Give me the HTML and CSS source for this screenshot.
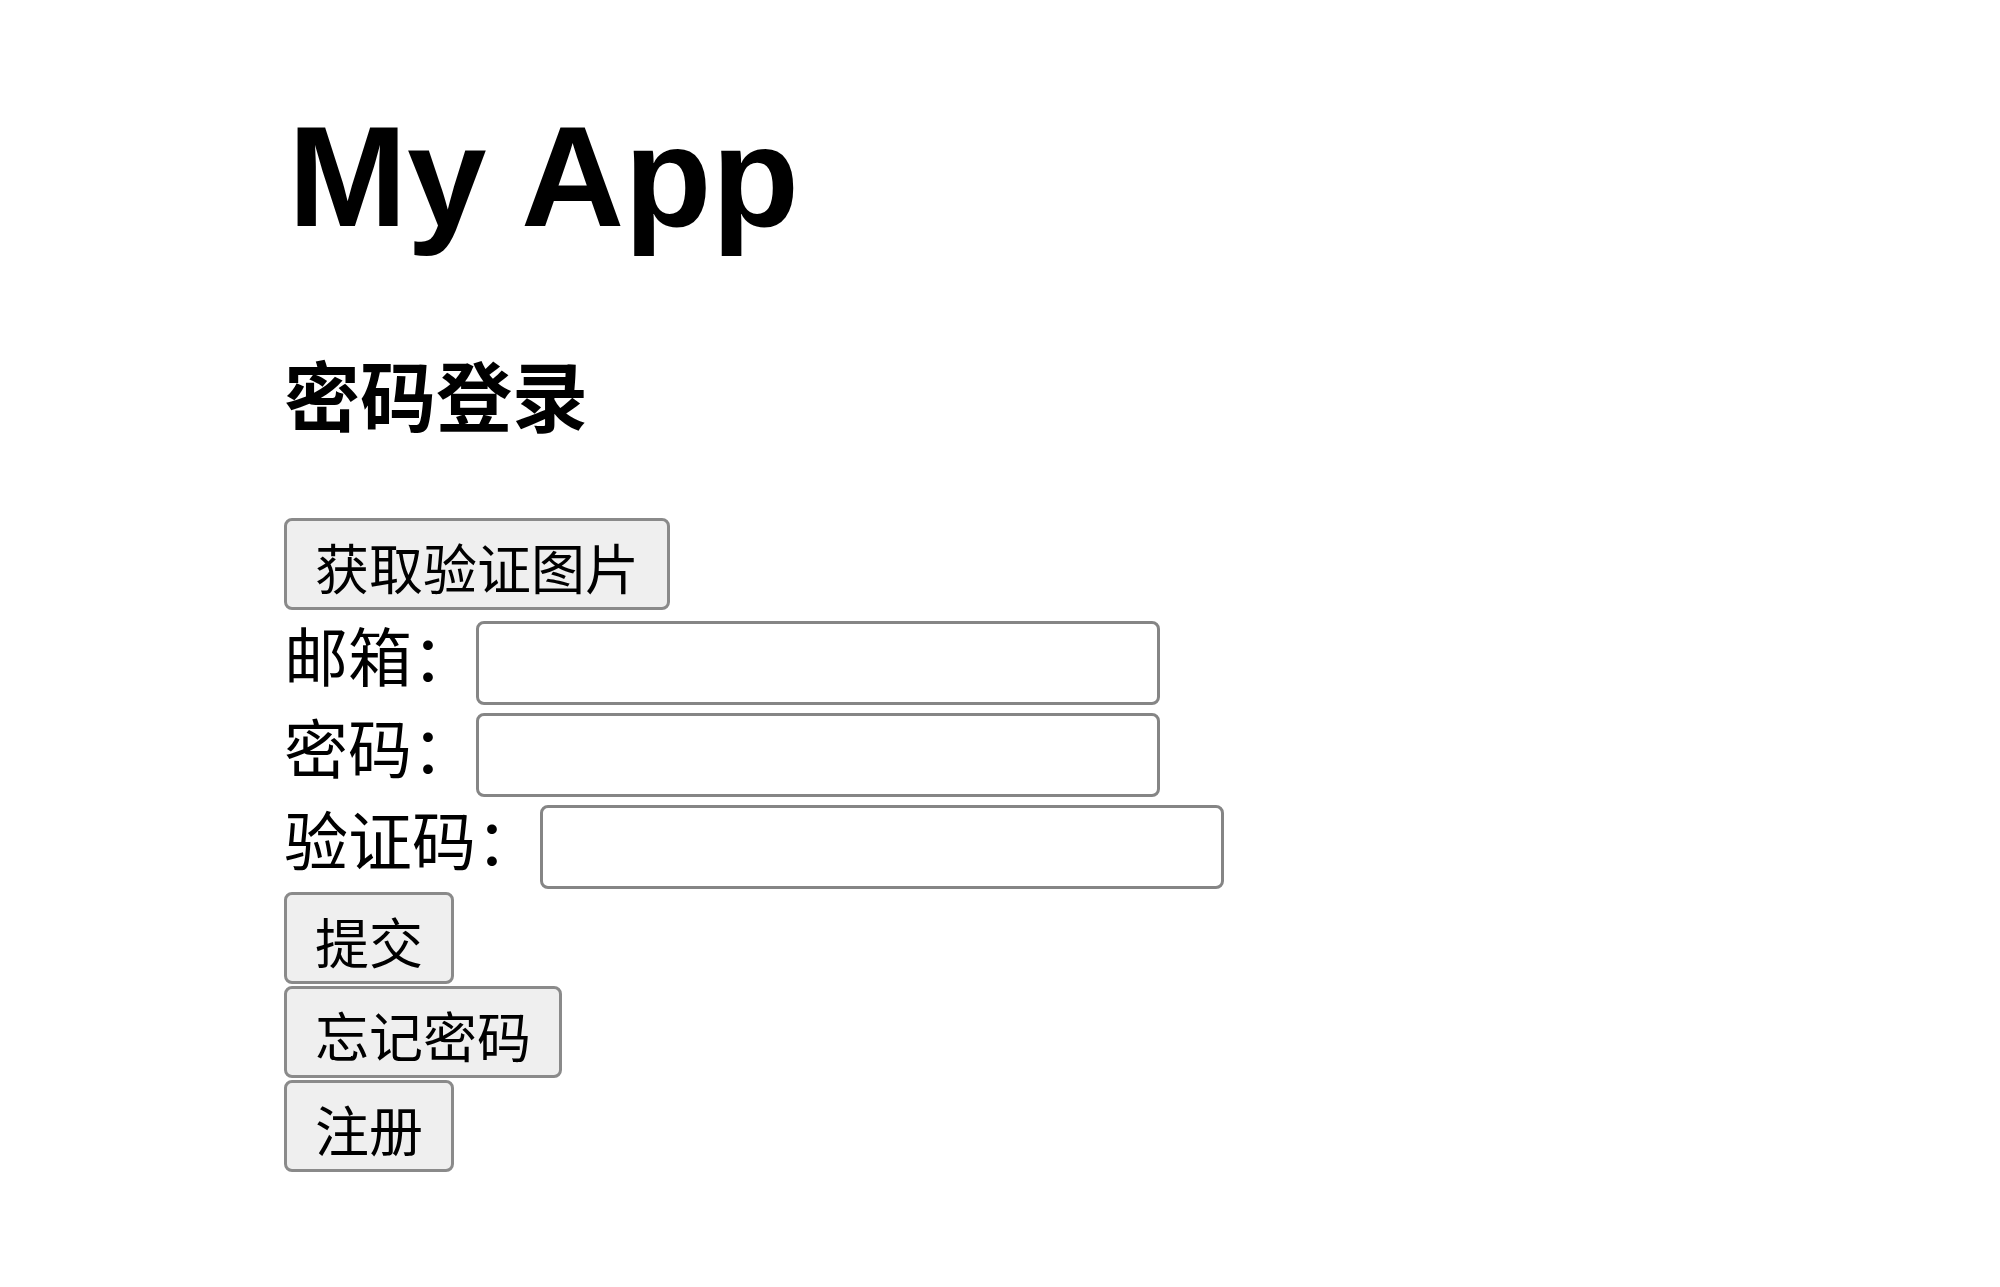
FILE: index.html
```html
<!DOCTYPE html>
<html lang="zh-CN">
<head>
    <meta charset="UTF-8">
    <meta name="viewport" content="width=device-width, initial-scale=1.0">
    <title>My App</title>
    <link rel="stylesheet" href="styles.css">
</head>
<body>
    <div class="container">
        <h1>My App</h1>
        <h2>密码登录</h2>
        <form class="login" id="loginForm">
            <button type="button" id="getCaptcha">获取验证图片</button>
            <div class="fields">
                <div class="field">
                    <label for="email">邮箱：</label>
                    <input type="text" id="email" name="email">
                </div>
                <div class="field">
                    <label for="password">密码：</label>
                    <input type="password" id="password" name="password">
                </div>
                <div class="field">
                    <label for="captcha">验证码：</label>
                    <input type="text" id="captcha" name="captcha">
                </div>
            </div>
            <button type="submit">提交</button>
            <button type="button">忘记密码</button>
            <button type="button">注册</button>
        </form>
    </div>
</body>
</html>
```

FILE: styles.css
```css
body {
    margin: 0;
    background-color: #fff;
    color: #000;
    font-family: "Noto Sans CJK SC", "Noto Sans", sans-serif;
}
.container {
    padding: 95px 0 0 284px;
}
h1 {
    font-family: "Liberation Sans", Arial, sans-serif;
    font-size: 143px;
    font-weight: bold;
    line-height: 163px;
    margin: 0 0 0 4px;
}
h2 {
    font-size: 76px;
    font-weight: bold;
    line-height: 77px;
    margin: 97px 0 86px;
}
.login {
    display: flex;
    flex-direction: column;
    align-items: flex-start;
    gap: 2px;
}
.fields {
    display: flex;
    flex-direction: column;
    gap: 8px;
    margin: 9px 0 1px;
}
.field {
    display: flex;
    align-items: flex-start;
}
label {
    font-size: 64px;
    line-height: 64px;
    white-space: nowrap;
}
input[type="text"], input[type="password"] {
    box-sizing: border-box;
    width: 684px;
    height: 84px;
    border: 3px solid #858585;
    border-radius: 8px;
    background-color: #fff;
    padding: 0 8px;
    font-size: 54px;
    margin: 0;
}
button {
    box-sizing: border-box;
    height: 92px;
    padding: 6px 28px 0;
    line-height: 80px;
    font-family: "Noto Sans CJK SC", sans-serif;
    font-size: 54px;
    color: #000;
    background-color: #efefef;
    border: 3px solid #8a8a8a;
    border-radius: 8px;
    margin: 0;
    white-space: nowrap;
}
```
